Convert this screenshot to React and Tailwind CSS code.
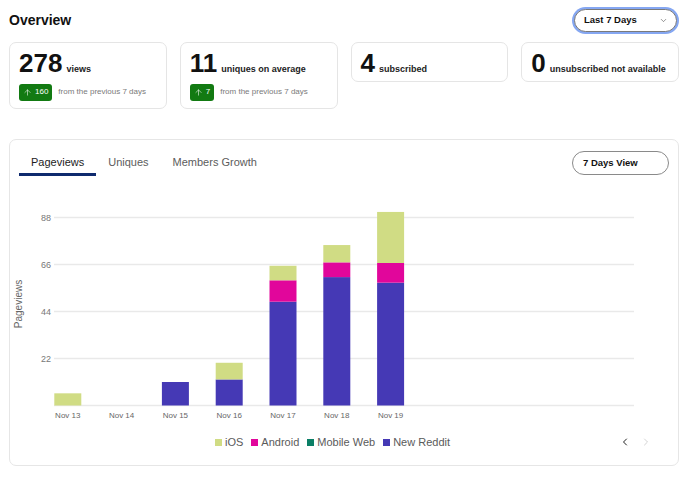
import { ChevronDown, ChevronLeft, ChevronRight, ArrowUp } from 'lucide-react';

const COLORS = {
  ios: '#d0dc84',
  android: '#e1069b',
  web: '#0b7f66',
  reddit: '#4539b5',
};

// stacked values per day: new reddit, android, ios
const DAYS = [
  { label: 'Nov 13', reddit: 0, android: 0, ios: 5.7 },
  { label: 'Nov 14', reddit: 0, android: 0, ios: 0 },
  { label: 'Nov 15', reddit: 11, android: 0, ios: 0 },
  { label: 'Nov 16', reddit: 12.2, android: 0, ios: 7.8 },
  { label: 'Nov 17', reddit: 48.6, android: 10, ios: 6.8 },
  { label: 'Nov 18', reddit: 60.1, android: 6.9, ios: 8.1 },
  { label: 'Nov 19', reddit: 57.5, android: 9.2, ios: 23.9 },
];

const BASE = 220.5;
const PX = 47 / 22;
const yOf = (v) => BASE - v * PX;

const StatCard = ({ value, label, delta }) => (
  <div
    className={
      'rounded-[7px] border border-[#e5e5e5] bg-white px-[9px] pt-[8px] ' + (delta ? 'h-[67px]' : 'h-[40px]')
    }
  >
    <div className="flex items-baseline gap-[4px]">
      <span className="text-[26px] leading-[24px] font-bold text-[#111]">{value}</span>
      <span className="text-[9px] font-bold text-[#222]">{label}</span>
    </div>
    {delta && (
      <div className="flex items-center gap-[6px] mt-[7px]">
        <div className="flex items-center gap-[3px] h-[17px] px-[4px] rounded-[3px] bg-[#127a12] text-white">
          <ArrowUp size={9} strokeWidth={1.5} />
          <span className="text-[8px] leading-none">{delta}</span>
        </div>
        <span className="text-[8px] text-[#7a7a7a]">from the previous 7 days</span>
      </div>
    )}
  </div>
);

const Chart = () => (
  <svg width="669" height="240" className="block">
    {[0, 22, 44, 66, 88].map((v) => (
      <g key={v}>
        <line x1="44" x2="624" y1={yOf(v)} y2={yOf(v)} stroke="#e9e9e9" strokeWidth="1.5" />
        {v > 0 && (
          <text x="41" y={yOf(v) + 3} textAnchor="end" fontSize="9" fill="#777">
            {v}
          </text>
        )}
      </g>
    ))}
    <text
      x="9"
      y="119"
      transform="rotate(-90 9 119)"
      textAnchor="middle"
      dominantBaseline="middle"
      fontSize="10"
      fill="#666"
    >
      Pageviews
    </text>
    {DAYS.map((d, i) => {
      const x = 44.3 + i * 53.8;
      const segs = [
        ['reddit', 0, d.reddit],
        ['android', d.reddit, d.reddit + d.android],
        ['ios', d.reddit + d.android, d.reddit + d.android + d.ios],
      ];
      return (
        <g key={d.label}>
          {segs.map(([k, a, b]) =>
            b > a ? (
              <rect
                key={k}
                x={x}
                y={yOf(b)}
                width="27"
                height={yOf(a) - yOf(b)}
                fill={COLORS[k]}
              />
            ) : null
          )}
          <text x={x + 13.5} y="233" textAnchor="middle" fontSize="8" fill="#666">
            {d.label}
          </text>
        </g>
      );
    })}
  </svg>
);

const Legend = ({ color, label }) => (
  <div className="flex items-center gap-[3px]">
    <span className="w-[7px] h-[7px]" style={{ backgroundColor: color }} />
    <span className="text-[11px] text-[#5a5a5a]">{label}</span>
  </div>
);

export default function App() {
  return (
    <div
      className="w-[690px] h-[480px] bg-white pl-[9px] pr-[11px] pt-[7px] overflow-hidden"
      style={{ fontFamily: '"Liberation Sans", Arial, sans-serif' }}
    >
      {/* Header */}
      <div className="flex items-center justify-between h-[27px]">
        <h1 className="text-[14px] font-bold text-[#111]">Overview</h1>
        <button className="mr-[2px] flex items-center justify-between w-[103px] h-[23px] pl-[9px] pr-[8px] rounded-full border border-[#7a7a7a] ring-2 ring-[#85a7f2] bg-white">
          <span className="text-[9.5px] font-bold text-[#111]">Last 7 Days</span>
          <ChevronDown size={9} strokeWidth={1.5} className="text-[#444]" />
        </button>
      </div>

      {/* Stat cards */}
      <div className="grid grid-cols-4 gap-[13px] items-start mt-[8px]">
        <StatCard value="278" label="views" delta="160" />
        <StatCard value="11" label="uniques on average" delta="7" />
        <StatCard value="4" label="subscribed" />
        <StatCard value="0" label="unsubscribed not available" />
      </div>

      {/* Chart card */}
      <div className="mt-[30px] h-[327px] rounded-[7px] border border-[#e6e6e6]">
        <div className="flex items-start justify-between pt-[11px] px-[9px]">
          <div className="flex">
            <div className="h-[25px] px-[12px] border-b-[3px] border-[#0e2a6e] text-[11px] text-[#1c1c1c] flex items-center">
              Pageviews
            </div>
            <div className="h-[25px] px-[12px] border-b-[3px] border-transparent text-[11px] text-[#5c5c5c] flex items-center">
              Uniques
            </div>
            <div className="h-[25px] px-[12px] border-b-[3px] border-transparent text-[11px] text-[#5c5c5c] flex items-center">
              Members Growth
            </div>
          </div>
          <button className="w-[97px] h-[24px] rounded-full border border-[#8a8a8a] text-left pl-[10px] text-[9.5px] font-bold text-[#111]">
            7 Days View
          </button>
        </div>

        <div className="mt-[9px]">
          <Chart />
        </div>

        <div className="flex items-center h-[24px] mt-[5px]">
          <div className="flex items-center gap-[8px] ml-[205px]">
            <Legend color={COLORS.ios} label="iOS" />
            <Legend color={COLORS.android} label="Android" />
            <Legend color={COLORS.web} label="Mobile Web" />
            <Legend color={COLORS.reddit} label="New Reddit" />
          </div>
          <div className="ml-auto mr-[26px] flex items-center gap-[9px]">
            <ChevronLeft size={12} strokeWidth={2} className="text-[#222]" />
            <ChevronRight size={12} strokeWidth={1.5} className="text-[#c4c4c4]" />
          </div>
        </div>
      </div>
    </div>
  );
}
